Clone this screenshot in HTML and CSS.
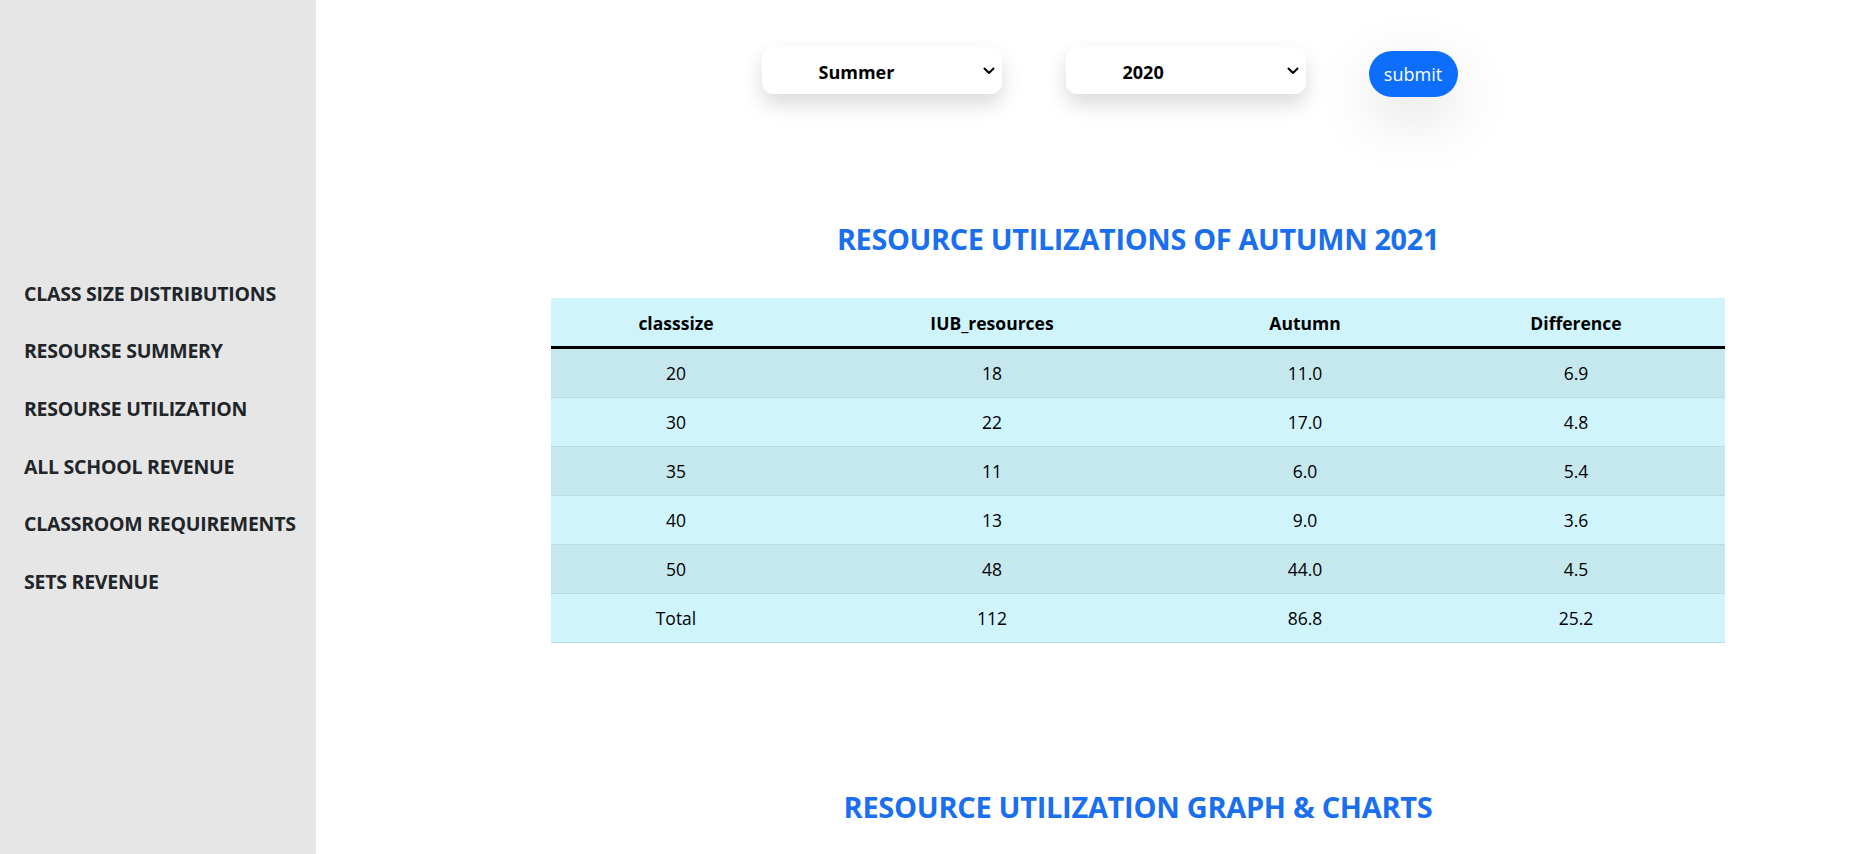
FILE: index.html
```html
<!DOCTYPE html>
<html lang="en">
<head>
<meta charset="utf-8">
<title>Resource Utilization</title>
<link rel="stylesheet" href="styles.css">
</head>
<body>
<div class="layout">
  <aside class="sidebar">
    <nav class="nav">
      <a class="nav-link" href="#">CLASS SIZE DISTRIBUTIONS</a>
      <a class="nav-link" href="#">RESOURSE SUMMERY</a>
      <a class="nav-link" href="#">RESOURSE UTILIZATION</a>
      <a class="nav-link" href="#">ALL SCHOOL REVENUE</a>
      <a class="nav-link" href="#">CLASSROOM REQUIREMENTS</a>
      <a class="nav-link" href="#">SETS REVENUE</a>
    </nav>
  </aside>
  <main class="main">
    <form class="filters">
      <div class="select-wrap">
        <select class="select">
          <option>Summer</option>
          <option>Autumn</option>
          <option>Spring</option>
        </select>
        <svg class="chev" width="12" height="8" viewBox="0 0 12 8"><path d="M1.5 1.5 L6 6 L10.5 1.5" fill="none" stroke="#000" stroke-width="2" stroke-linecap="round" stroke-linejoin="round"/></svg>
      </div>
      <div class="select-wrap">
        <select class="select">
          <option>2020</option>
          <option>2021</option>
        </select>
        <svg class="chev" width="12" height="8" viewBox="0 0 12 8"><path d="M1.5 1.5 L6 6 L10.5 1.5" fill="none" stroke="#000" stroke-width="2" stroke-linecap="round" stroke-linejoin="round"/></svg>
      </div>
      <button class="btn" type="button">submit</button>
    </form>

    <h2 class="title title-first">RESOURCE UTILIZATIONS OF AUTUMN 2021</h2>

    <table class="table">
      <colgroup>
        <col class="c1"><col class="c2"><col class="c3"><col class="c4">
      </colgroup>
      <thead>
        <tr><th>classsize</th><th>IUB_resources</th><th>Autumn</th><th>Difference</th></tr>
      </thead>
      <tbody>
        <tr class="odd"><td>20</td><td>18</td><td>11.0</td><td>6.9</td></tr>
        <tr><td>30</td><td>22</td><td>17.0</td><td>4.8</td></tr>
        <tr class="odd"><td>35</td><td>11</td><td>6.0</td><td>5.4</td></tr>
        <tr><td>40</td><td>13</td><td>9.0</td><td>3.6</td></tr>
        <tr class="odd"><td>50</td><td>48</td><td>44.0</td><td>4.5</td></tr>
        <tr><td>Total</td><td>112</td><td>86.8</td><td>25.2</td></tr>
      </tbody>
    </table>

    <h2 class="title title-second">RESOURCE UTILIZATION GRAPH &amp; CHARTS</h2>
  </main>
</div>
</body>
</html>
```

FILE: styles.css
```css
* { box-sizing: border-box; }

html, body {
  margin: 0;
  padding: 0;
}

body {
  font-family: "Open Sans", "Noto Sans", "Liberation Sans", sans-serif;
  color: #212529;
  background: #fff;
  overflow: hidden;
}

.layout {
  display: grid;
  grid-template-columns: 316px 1fr;
  min-height: 100vh;
}

.sidebar {
  background: #e6e6e6;
  min-height: 100vh;
}

.nav {
  display: flex;
  flex-direction: column;
  padding: 265px 0 0 24px;
}

.nav-link {
  display: block;
  color: #212529;
  text-decoration: none;
  font-weight: 700;
  font-size: 19.5px;
  line-height: 24px;
  padding: 16.8px 0;
  letter-spacing: -0.25px;
}

.main {
  padding: 0 0 0 90px;
  display: flex;
  flex-direction: column;
  align-items: center;
}

.filters {
  display: flex;
  align-items: flex-start;
  margin-top: 47px;
  padding-right: 57px;
}

.select-wrap {
  position: relative;
  width: 240px;
  height: 47px;
  margin-right: 64px;
}

.select {
  appearance: none;
  -webkit-appearance: none;
  width: 100%;
  height: 100%;
  border: none;
  border-radius: 11px;
  background: #fff;
  box-shadow: 0 10px 20px rgba(0, 0, 0, 0.15);
  font-family: inherit;
  font-weight: 700;
  font-size: 18px;
  color: #000;
  padding: 2px 30px 0 57px;
  outline: none;
}

.chev {
  position: absolute;
  right: 7px;
  top: 20px;
  pointer-events: none;
}

.btn {
  margin-left: -1px;
  margin-top: 4px;
  width: 89px;
  height: 46px;
  border: none;
  border-radius: 23px;
  background: #0d6efd;
  color: #fff;
  font-family: inherit;
  font-size: 18px;
  padding: 0;
  box-shadow: 0 20px 60px rgba(0, 0, 0, 0.13);
}

.title {
  margin: 0;
  color: #1a6ef0;
  font-weight: 700;
  line-height: 36px;
  text-align: center;
}

.title-first {
  margin-top: 124px;
  font-size: 28.8px;
  letter-spacing: -0.3px;
}

.table {
  margin-top: 41px;
  width: 1174px;
  border-collapse: collapse;
  color: #000;
  font-size: 17.5px;
}

.title-second {
  margin-top: 146px;
  font-size: 29px;
  letter-spacing: -0.3px;
}

.c1 { width: 250px; }
.c2 { width: 382px; }
.c3 { width: 244px; }
.c4 { width: 298px; }

.table th,
.table td {
  text-align: center;
  padding: 10px 8px;
  line-height: 28px;
  background: #cff4fc;
}

.table th {
  padding-top: 11px;
  padding-bottom: 9px;
  font-weight: 700;
  border-bottom: 3px solid #000;
}

.table td {
  border-bottom: 1px solid #badce3;
  font-weight: 400;
}

.table tr.odd td {
  background: #c5e8ef;
}
```
